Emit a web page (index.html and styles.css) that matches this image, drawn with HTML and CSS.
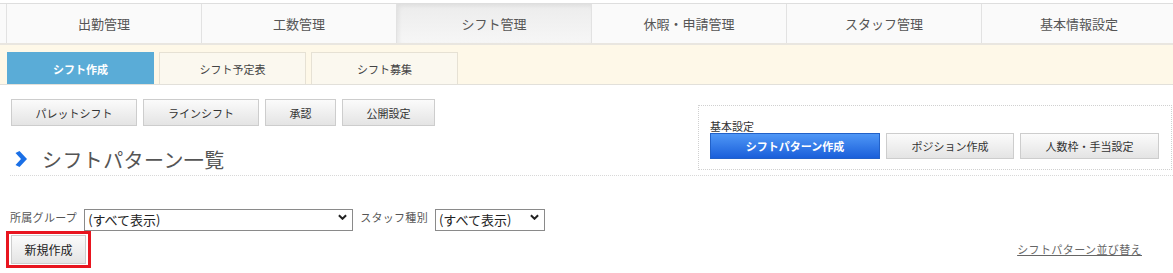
FILE: index.html
```html
<!DOCTYPE html>
<html lang="ja">
<head>
    <meta charset="UTF-8">
    <title>シフトパターン一覧</title>
    <link rel="stylesheet" href="styles.css">
</head>
<body>
    <div class="global-nav">
        <div class="nav-tab">出勤管理</div>
        <div class="nav-tab">工数管理</div>
        <div class="nav-tab active">シフト管理</div>
        <div class="nav-tab">休暇・申請管理</div>
        <div class="nav-tab">スタッフ管理</div>
        <div class="nav-tab">基本情報設定</div>
    </div>

    <div class="sub-nav">
        <div class="sub-tab active">シフト作成</div>
        <div class="sub-tab">シフト予定表</div>
        <div class="sub-tab">シフト募集</div>
    </div>

    <div class="content">
        <div class="page-head">
            <div class="head-left">
                <div class="toolbar">
                    <button class="btn btn-w1">パレットシフト</button>
                    <button class="btn btn-w2">ラインシフト</button>
                    <button class="btn btn-w3">承認</button>
                    <button class="btn btn-w4">公開設定</button>
                </div>
                <h1 class="page-title">
                    <svg class="chevron" viewBox="0 0 12 16" xmlns="http://www.w3.org/2000/svg">
                        <path d="M0.5 2 L4.5 0 L12 8 L4.5 16 L0.5 14 L6 8 Z"></path>
                    </svg>
                    シフトパターン一覧
                </h1>
            </div>
            <div class="settings-box">
                <div class="settings-label">基本設定</div>
                <div class="settings-buttons">
                    <button class="btn btn-primary btn-s1">シフトパターン作成</button>
                    <button class="btn btn-s2">ポジション作成</button>
                    <button class="btn btn-s3">人数枠・手当設定</button>
                </div>
            </div>
        </div>

        <div class="filter-row">
            <label class="filter-label">所属グループ</label>
            <div class="select-wrap select-group">
                <select class="select">
                    <option>(すべて表示)</option>
                </select>
                <svg class="select-arrow" viewBox="0 0 10 6" xmlns="http://www.w3.org/2000/svg">
                    <path d="M1 1 L5 5 L9 1"></path>
                </svg>
            </div>
            <label class="filter-label">スタッフ種別</label>
            <div class="select-wrap select-type">
                <select class="select">
                    <option>(すべて表示)</option>
                </select>
                <svg class="select-arrow" viewBox="0 0 10 6" xmlns="http://www.w3.org/2000/svg">
                    <path d="M1 1 L5 5 L9 1"></path>
                </svg>
            </div>
        </div>

        <div class="action-row">
            <div class="highlight">
                <button class="btn btn-new">新規作成</button>
            </div>
            <a href="#" class="sort-link">シフトパターン並び替え</a>
        </div>
    </div>
</body>
</html>
```

FILE: styles.css
```css
* {
    margin: 0;
    padding: 0;
    box-sizing: border-box;
}

body {
    font-family: "Noto Sans CJK JP", "Noto Sans", sans-serif;
    background-color: #fff;
    color: #333;
    padding-top: 3px;
    width: 1173px;
    overflow: hidden;
}

/* Global navigation */
.global-nav {
    display: flex;
    padding-left: 6px;
    background-color: #fafafa;
    border-top: 1px solid #dedede;
    border-bottom: 2px solid #e9e6e0;
    height: 42px;
}

.nav-tab {
    flex: 0 0 195px;
    height: 39px;
    border-left: 1px solid #e2e2e2;
    display: flex;
    justify-content: center;
    align-items: center;
    font-size: 13px;
    color: #555;
}

.nav-tab.active {
    background: linear-gradient(#ececec, #f6f6f6);
    box-shadow: inset 2px 2px 4px rgba(0, 0, 0, 0.06);
}

/* Sub navigation */
.sub-nav {
    display: flex;
    gap: 5px;
    padding: 7px 0 0 7px;
    height: 40px;
    background-color: #fef8e8;
    border-bottom: 1px solid #e2e0da;
}

.sub-tab {
    width: 147px;
    height: 32px;
    display: flex;
    justify-content: center;
    align-items: center;
    background-color: #fbf8ef;
    border: 1px solid #e6e1d4;
    border-bottom: none;
    font-size: 11px;
    color: #444;
}

.sub-tab.active {
    background-color: #5aacd7;
    border-color: #5aacd7;
    color: #fff;
    font-weight: bold;
}

/* Content */
.content {
    padding: 0 0 0 10px;
}

.page-head {
    display: flex;
    justify-content: space-between;
    align-items: flex-end;
    border-bottom: 1px dotted #d8d8d8;
    padding-bottom: 5px;
}

.toolbar {
    display: flex;
    gap: 6px;
    padding: 14px 0 0 1px;
}

.btn {
    height: 27px;
    border: 1px solid #cdcdcd;
    background: linear-gradient(#fbfbfb, #e4e4e4);
    font-family: inherit;
    font-size: 11px;
    color: #333;
    cursor: pointer;
}

.btn-w1 { width: 126px; }
.btn-w2 { width: 116px; }
.btn-w3 { width: 71px; }
.btn-w4 { width: 93px; }

.page-title {
    display: flex;
    align-items: center;
    margin-top: 22px;
    height: 22px;
    font-size: 20px;
    font-weight: normal;
    color: #555;
    letter-spacing: 0.4px;
}

.chevron {
    width: 12px;
    height: 16px;
    margin: 0 15px 0 5px;
    fill: #1a6fe6;
}

.settings-box {
    width: 474px;
    height: 65px;
    margin-right: 1px;
    border: 1px dotted #d0d0d0;
    padding: 13px 0 0 11px;
}

.settings-label {
    font-size: 11px;
    color: #333;
    line-height: 14px;
}

.settings-buttons {
    display: flex;
    gap: 6px;
}

.btn-primary {
    background: linear-gradient(#4f97f6, #1a5fda);
    border-color: #2261c8;
    color: #fff;
    font-weight: bold;
}

.btn-s1 { width: 170px; height: 26px; }
.btn-s2 { width: 128px; height: 26px; }
.btn-s3 { width: 139px; height: 26px; }

/* Filters */
.filter-row {
    display: flex;
    align-items: center;
    margin-top: 30px;
    height: 22px;
}

.filter-label {
    font-size: 11px;
    color: #555;
    letter-spacing: 0.3px;
    margin-right: 7px;
}

.select-wrap {
    position: relative;
    height: 22px;
    margin-right: 7px;
}

.select-group { width: 269px; }
.select-type { width: 110px; }

.select {
    appearance: none;
    -webkit-appearance: none;
    width: 100%;
    height: 22px;
    border: 1px solid #8a8a8a;
    background: #fff;
    font-family: inherit;
    font-size: 13px;
    color: #222;
    padding: 0 20px 0 3px;
    line-height: 20px;
}

.select-arrow {
    position: absolute;
    right: 6px;
    top: 8px;
    width: 9px;
    height: 6px;
    fill: none;
    stroke: #222;
    stroke-width: 2.2;
}

/* Action row */
.action-row {
    display: flex;
    justify-content: space-between;
    align-items: flex-end;
    margin-top: 3px;
    margin-left: -4px;
}

.highlight {
    border: 3px solid #e8151f;
    padding: 1px 2px;
}

.btn-new {
    width: 75px;
    height: 29px;
    font-size: 12px;
    color: #222;
}

.sort-link {
    font-size: 11px;
    color: #666;
    text-decoration: underline;
    letter-spacing: 0.4px;
    margin-right: 31px;
    margin-bottom: 11px;
}
```
